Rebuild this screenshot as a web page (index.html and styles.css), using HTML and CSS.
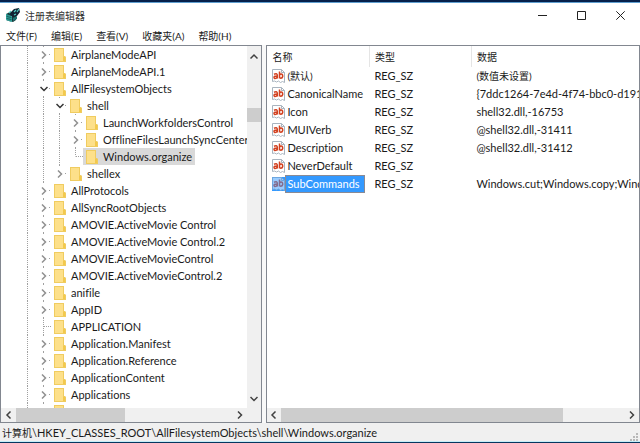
FILE: index.html
```html
<!DOCTYPE html>
<html lang="zh-CN">
<head>
    <meta charset="UTF-8">
    <meta name="viewport" content="width=device-width, initial-scale=1.0">
    <title>注册表编辑器</title>
    <link rel="stylesheet" href="styles.css">
</head>
<body>
<svg class="symbols" aria-hidden="true">
    <symbol id="folder" viewBox="0 0 12 14">
        <path d="M0 0h10v8h1l1 1v5H0z" fill="#f0cc60"/>
        <path d="M1 1h8v12H1z" fill="#fde08a"/>
        <path d="M9 9h2v4H9z" fill="#f3c94c"/>
    </symbol>
    <symbol id="string" viewBox="0 0 13 14">
        <path d="M.5 .5h9l3 3v10l-2-1-2 1-2-1.5-2 1-2-1-2 .5z" fill="#fff" stroke="#a9b4bf"/>
        <path d="M9.500 .5v3h3" fill="none" stroke="#a9b4bf"/>
        <g fill="none" stroke="#d2401f" stroke-width="1.500">
            <path d="M2 5.200q3-1.400 3.300.8v3.500M5.300 7q-3.300-.2-3.300 1.300 0 1.500 1.800 1 1.300-.4 1.500-1.300"/>
            <path d="M7.500 2.500v7M7.500 6q1-1.300 2.400-.8 1 .8.8 2.300-.4 1.800-2 1.700-1.200-.3-1.200-1.700"/>
        </g>
    </symbol>
    <symbol id="right" viewBox="0 0 8 8"><path d="M2 .5L5.500 4 2 7.500"/></symbol>
    <symbol id="left" viewBox="0 0 8 8"><path d="M5.500 .5L2 4l3.500 3.500"/></symbol>
    <symbol id="down" viewBox="0 0 8 8"><path d="M.5 2L4 5.500 7.500 2"/></symbol>
    <symbol id="up" viewBox="0 0 8 8"><path d="M.5 5.500L4 2l3.500 3.500"/></symbol>
</svg>

<div class="window">
    <header class="titlebar">
        <svg class="app-icon" viewBox="0 0 14 14">
            <path d="M0 6l4-2 6 2v6l-3 2-7-2z" fill="#16383a"/>
            <path d="M0 6l6 2v6l-6-2z" fill="#39b5ad"/>
            <path d="M2 6.500v6M4 7v6.500M0 8l6 2M0 10l6 2" stroke="#125856" stroke-width=".7"/>
            <path d="M5 4l3-3 5-1 1 4-3 4-4 1-3-2z" fill="#123"/>
            <path d="M8 4l2-2M11 4l2-3M3 5l2-2M8 7l2-1" stroke="#4fd0c5" stroke-width="1.200"/>
            <path d="M7 10l4-2v3l-4 2z" fill="#1c6f6f"/>
        </svg>
        <h1>注册表编辑器</h1>
        <div class="window-buttons">
            <button aria-label="最小化"><svg viewBox="0 0 9 9"><path d="M0 4.500h9"/></svg></button>
            <button aria-label="最大化"><svg viewBox="0 0 9 9"><path d="M.5 .5h8v8h-8z"/></svg></button>
            <button aria-label="关闭"><svg viewBox="0 0 9 9"><path d="M.3 .3l8.400 8.400M8.700 .3L.3 8.700"/></svg></button>
        </div>
    </header>

    <nav class="menubar">
        <button>文件(F)</button>
        <button>编辑(E)</button>
        <button>查看(V)</button>
        <button>收藏夹(A)</button>
        <button>帮助(H)</button>
    </nav>

    <main class="panes">
        <section class="pane tree-pane">
            <div class="pane-body">
                <ul class="tree" id="tree"></ul>
                <div class="scroll vertical">
                    <button aria-label="向上滚动"><svg class="arrow"><use href="#up"/></svg></button>
                    <div class="track"><div class="thumb"></div></div>
                    <button aria-label="向下滚动"><svg class="arrow"><use href="#down"/></svg></button>
                </div>
            </div>
            <div class="scroll horizontal">
                <button aria-label="向左滚动"><svg class="arrow"><use href="#left"/></svg></button>
                <div class="track"><div class="thumb"></div></div>
                <button aria-label="向右滚动"><svg class="arrow"><use href="#right"/></svg></button>
            </div>
        </section>

        <section class="pane value-pane">
            <div class="pane-body">
                <table class="values">
                    <thead>
                        <tr><th class="col-name">名称</th><th class="col-type">类型</th><th>数据</th></tr>
                    </thead>
                    <tbody id="values"></tbody>
                </table>
            </div>
            <div class="scroll horizontal">
                <button aria-label="向左滚动"><svg class="arrow"><use href="#left"/></svg></button>
                <div class="track"><div class="thumb"></div></div>
                <button aria-label="向右滚动"><svg class="arrow"><use href="#right"/></svg></button>
            </div>
        </section>
    </main>

    <footer class="statusbar">
        <span><span class="cn">计算机</span>\HKEY_CLASSES_ROOT\AllFilesystemObjects\shell\Windows.organize</span>
        <svg class="grip" viewBox="0 0 8 8"><path d="M6 0h2v2H6zM3 3h2v2H3zM6 3h2v2H6zM0 6h2v2H0zM3 6h2v2H3zM6 6h2v2H6z"/></svg>
    </footer>
</div>
<script src="script.js"></script>
</body>
</html>
```
FILE: styles.css
```css
* {
    box-sizing: border-box;
}

body {
    margin: 0;
    font-family: Lato, "Noto Sans CJK SC", sans-serif;
    font-size: 11px;
    font-variant-ligatures: none;
    color: #1a1a1a;
}

button {
    border: none;
    padding: 0;
    background: none;
    font: inherit;
    color: inherit;
}

ul {
    list-style: none;
    margin: 0;
    padding: 0;
}

.symbols {
    display: none;
}

.cn {
    font-size: 10px;
}

.window {
    display: flex;
    flex-direction: column;
    height: 100vh;
    background: #fff;
    border-top: 2px solid #06204a;
    border-bottom: 1px solid #06375f;
    overflow: hidden;
}

/* title and menu */

.titlebar {
    display: flex;
    align-items: center;
    height: 25px;
    padding-left: 6px;
    border-top: 1px solid #5f9fd0;
}

.app-icon {
    width: 14px;
    height: 14px;
    margin-right: 5px;
}

.titlebar h1 {
    flex: 1;
    margin: 0;
    font-size: 10px;
    font-weight: normal;
    color: #333;
}

.window-buttons {
    display: flex;
}

.window-buttons button {
    display: flex;
    align-items: center;
    justify-content: center;
    width: 39px;
    height: 24px;
}

.window-buttons svg {
    width: 9px;
    height: 9px;
    fill: none;
    stroke: #222;
}

.menubar {
    display: flex;
    gap: 14px;
    height: 18px;
    padding: 0 6px;
    font-size: 10px;
    line-height: 18px;
}

/* panes */

.panes {
    display: flex;
    flex: 1;
    gap: 4px;
    min-height: 0;
    background: #f8f8f8;
}

.pane {
    display: flex;
    flex-direction: column;
    min-width: 0;
    background: #fff;
    border: 1px solid #828790;
}

.tree-pane {
    flex: 0 0 41%;
}

.value-pane {
    flex: 1;
}

.pane-body {
    display: flex;
    flex: 1;
    min-height: 0;
    overflow: hidden;
}

/* tree */

.tree {
    flex: 1;
    min-width: 0;
    padding-left: 18px;
    overflow: hidden;
}

.node {
    display: flex;
    align-items: center;
    height: 17px;
}

.guide {
    display: flex;
    flex: none;
    align-items: center;
    width: 16px;
    height: 17px;
    padding-left: 3px;
    background: repeating-linear-gradient(#a0a0a0 0 1px, transparent 1px 2px) 8px 0 / 1px 100% no-repeat;
}

.guide.last {
    background-size: 1px 50%;
}

.guide.none {
    background: none;
}

.guide.own::after {
    content: "";
    flex: 1;
    height: 1px;
    background: repeating-linear-gradient(90deg, #a0a0a0 0 1px, transparent 1px 2px);
}

.guide.leaf::after {
    margin-left: 6px;
}

.twisty {
    display: flex;
    align-items: center;
    justify-content: center;
    width: 11px;
    height: 13px;
    background: #fff;
    color: #909090;
}

.twisty.open {
    color: #333;
}

.key {
    display: flex;
    flex: none;
    align-items: center;
    gap: 5px;
    height: 17px;
    padding: 0 3px;
    white-space: nowrap;
}

.key.selected {
    background: #d9d9d9;
}

.folder {
    width: 12px;
    height: 14px;
}

.arrow {
    width: 8px;
    height: 8px;
    fill: none;
    stroke: currentColor;
    stroke-width: 1.5;
}

/* scrollbars */

.scroll {
    display: flex;
    flex: none;
    background: #f0f0f0;
    color: #404040;
}

.scroll button {
    display: flex;
    align-items: center;
    justify-content: center;
    width: 14px;
    height: 14px;
}

.scroll .thumb {
    background: #cdcdcd;
}

.vertical {
    flex-direction: column;
    width: 14px;
    padding: 4px 0 2px;
}

.vertical .track {
    flex: 1;
    padding-top: 44px;
}

.vertical .thumb {
    height: 14px;
}

.horizontal .track {
    flex: 1;
}

.horizontal .thumb {
    height: 100%;
}

.tree-pane .horizontal {
    padding: 0 14px 0 1px;
}

.tree-pane .horizontal .thumb {
    width: 50%;
}

.value-pane .thumb {
    width: 82%;
}

/* values */

.values {
    width: 100%;
    align-self: flex-start;
    table-layout: fixed;
    border-collapse: collapse;
}

.values th {
    height: 21px;
    padding: 0 5px;
    font-size: 10px;
    font-weight: normal;
    text-align: left;
    border-right: 1px solid #e5e5e5;
}

.values th:last-child {
    border-right: none;
}

.col-name {
    width: 102px;
}

.col-type {
    width: 102px;
}

.values td {
    height: 18px;
    padding: 0 5px;
    line-height: 18px;
    white-space: nowrap;
    overflow: hidden;
}

.values td:last-child {
    padding-right: 0;
}

.value {
    display: flex;
    align-items: center;
}

.value svg {
    flex: none;
    width: 13px;
    height: 14px;
}

.value span {
    padding: 0 4px 0 1px;
    border: 1px solid transparent;
    line-height: 16px;
}

.value.selected span {
    background: #3399ff;
    border-color: #8a8a94;
    color: #fff;
}

.value.selected svg {
    background: #3399ff;
}

.value.selected use {
    opacity: 0.5;
}

/* status */

.statusbar {
    display: flex;
    align-items: center;
    justify-content: space-between;
    height: 19px;
    padding: 0 2px;
    background: #f0f0f0;
    border-bottom: 1px solid #c5eef8;
}

.grip {
    align-self: flex-end;
    width: 8px;
    height: 8px;
    fill: #b8b8b8;
}
```
FILE: script.js
```js
// level is the depth under HKEY_CLASSES_ROOT, state is open, closed or leaf
const keys = [
    { name: "AirplaneModeAPI", level: 0, state: "closed" },
    { name: "AirplaneModeAPI.1", level: 0, state: "closed" },
    { name: "AllFilesystemObjects", level: 0, state: "open" },
    { name: "shell", level: 1, state: "open" },
    { name: "LaunchWorkfoldersControl", level: 2, state: "closed" },
    { name: "OfflineFilesLaunchSyncCenter", level: 2, state: "closed" },
    { name: "Windows.organize", level: 2, state: "leaf", last: true, selected: true },
    { name: "shellex", level: 1, state: "closed", last: true },
    { name: "AllProtocols", level: 0, state: "closed" },
    { name: "AllSyncRootObjects", level: 0, state: "closed" },
    { name: "AMOVIE.ActiveMovie Control", level: 0, state: "closed" },
    { name: "AMOVIE.ActiveMovie Control.2", level: 0, state: "closed" },
    { name: "AMOVIE.ActiveMovieControl", level: 0, state: "closed" },
    { name: "AMOVIE.ActiveMovieControl.2", level: 0, state: "closed" },
    { name: "anifile", level: 0, state: "closed" },
    { name: "AppID", level: 0, state: "closed" },
    { name: "APPLICATION", level: 0, state: "leaf" },
    { name: "Application.Manifest", level: 0, state: "closed" },
    { name: "Application.Reference", level: 0, state: "closed" },
    { name: "ApplicationContent", level: 0, state: "closed" },
    { name: "Applications", level: 0, state: "closed" },
    { name: "", level: 0, state: "closed" }
];

const values = [
    { name: "(默认)", type: "REG_SZ", data: "(数值未设置)", cn: true },
    { name: "CanonicalName", type: "REG_SZ", data: "{7ddc1264-7e4d-4f74-bbc0-d191" },
    { name: "Icon", type: "REG_SZ", data: "shell32.dll,-16753" },
    { name: "MUIVerb", type: "REG_SZ", data: "@shell32.dll,-31411" },
    { name: "Description", type: "REG_SZ", data: "@shell32.dll,-31412" },
    { name: "NeverDefault", type: "REG_SZ", data: "" },
    { name: "SubCommands", type: "REG_SZ", data: "Windows.cut;Windows.copy;Wind", selected: true }
];

function renderTree() {
    let tree = document.getElementById("tree");
    keys.forEach(key => {
        let li = document.createElement("li");
        li.className = "node";
        let twisty = "";
        if (key.state !== "leaf") {
            twisty = `
                <button class="twisty ${key.state}" aria-label="${key.name}">
                    <svg class="arrow"><use href="#${key.state === "open" ? "down" : "right"}"/></svg>
                </button>`;
        }
        li.innerHTML = `
            ${'<span class="guide"></span>'.repeat(key.level + 1)}
            <span class="guide own ${key.state === "leaf" ? "leaf" : ""} ${key.last ? "last" : ""}">${twisty}</span>
            <button class="key ${key.selected ? "selected" : ""}">
                <svg class="folder"><use href="#folder"/></svg>
                <span>${key.name}</span>
            </button>
        `;
        tree.appendChild(li);
    });
}

function renderValues() {
    let body = document.getElementById("values");
    values.forEach(value => {
        let tr = document.createElement("tr");
        let cn = value.cn ? "cn" : "";
        tr.innerHTML = `
            <td>
                <div class="value ${value.selected ? "selected" : ""}">
                    <svg><use href="#string"/></svg>
                    <span class="${cn}">${value.name}</span>
                </div>
            </td>
            <td>${value.type}</td>
            <td class="${cn}">${value.data}</td>
        `;
        body.appendChild(tr);
    });
}

renderTree();
renderValues();
```
